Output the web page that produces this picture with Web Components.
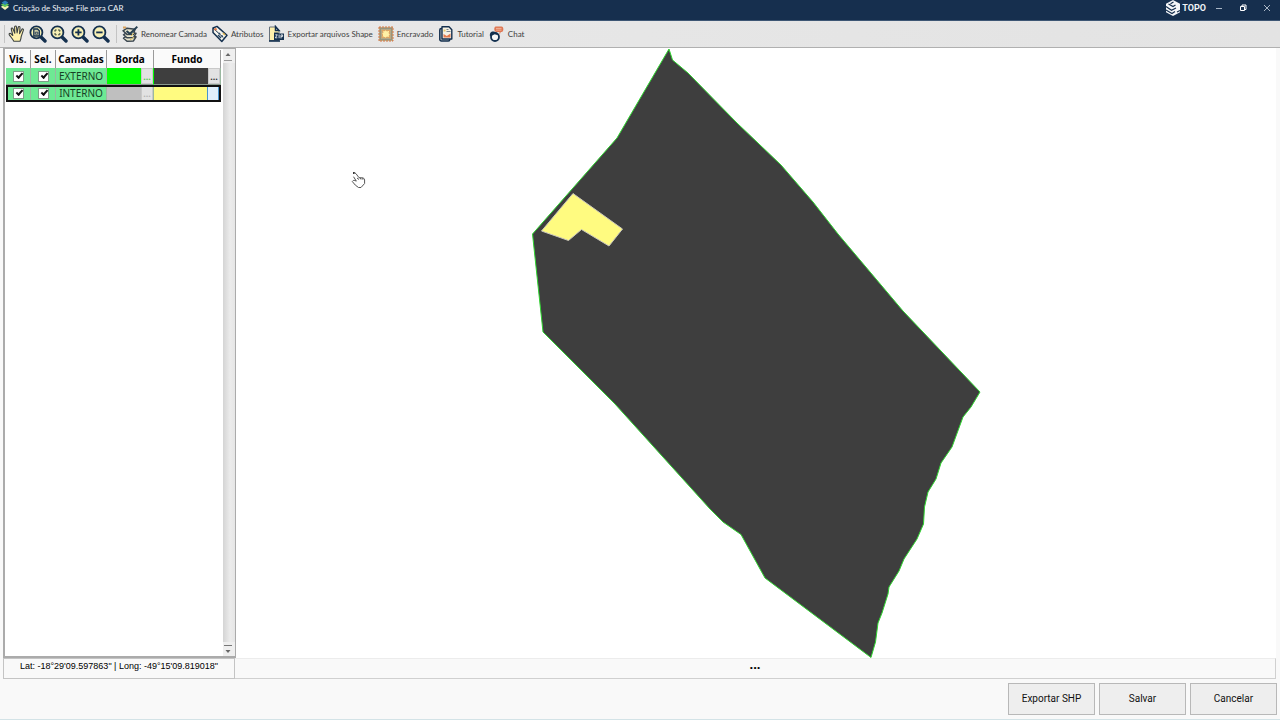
<!DOCTYPE html>
<html lang="pt-BR">
<head>
<meta charset="utf-8">
<title>Criação de Shape File para CAR</title>
<style>
html, body { height: 100%; margin: 0; }
body { font-family: "Noto Sans", "Open Sans", sans-serif; background: #f9f9f9; overflow: hidden; }
</style>
</head>
<body>
<app-window></app-window>
<script>
const define = (name, html, setup) => {
  const template = document.createElement('template');
  template.innerHTML = html;
  customElements.define(name, class extends HTMLElement {
    constructor() {
      super();
      this.attachShadow({ mode: 'open' }).append(template.content.cloneNode(true));
    }
    connectedCallback() { if (setup) setup(this, this.shadowRoot); }
  });
};

const lens = inner => `<svg viewBox="0 0 18 18"><path d="M11.5 11.5 16 16" stroke="#14304f" stroke-width="3.4" stroke-linecap="round"/><circle cx="7.4" cy="7.4" r="6" fill="#f7f0b5" stroke="#14304f" stroke-width="1.8"/>${inner}</svg>`;
const icons = {
  hand: `<svg viewBox="0 0 18 18"><path d="M5.8 16.2C4.4 13.6 2.3 11.4 1.2 9.6c-.5-1 .8-1.7 1.6-.9l2 1.8L3.3 4.2c-.3-1.2 1.2-1.6 1.7-.5l1.8 4.6L6.6 2c0-1.300 1.700-1.300 1.900 0l.6 5.900 1.100-5.600c.3-1.200 1.900-.9 1.800.3l-.4 6 2.200-4.200c.6-1 2-.4 1.600.7l-2.200 6.500c-.2 2.200-.3 3-1.200 4.600z" fill="#fff2ab" stroke="#3b4141" stroke-width="1.100" stroke-linejoin="round"/></svg>`,
  page: lens('<path d="M4.800 4h3.700L10.300 5.800V11H4.800z" fill="#d3d0a8" stroke="#14304f" stroke-width="1.300"/><path d="M6.300 7.200h2.500v2H6.300z" fill="none" stroke="#14304f" stroke-width=".8"/>'),
  fit: lens('<path d="M4.500 6.400 6.400 4.500M8.400 4.500l1.900 1.900M10.300 8.400l-1.900 1.900M6.400 10.300 4.500 8.400" fill="none" stroke="#5c6652" stroke-width="1.500"/>'),
  plus: lens('<path d="M7.400 4.200v6.400M4.200 7.400h6.400" stroke="#14304f" stroke-width="1.800"/>'),
  minus: lens('<path d="M4.200 7.400h6.400" stroke="#14304f" stroke-width="1.800"/>'),
  layers: `<svg viewBox="0 0 18 18"><g fill="#e9e5cd" stroke="#3a4650" stroke-width="1.500" stroke-linejoin="round"><path d="M2.500 13.200 5 11.500l10 .3-2.500 4.100-6.500.4z"/><path d="M2.500 9.800 5 8l10 .3-2.500 4.200-6.500.3z"/><path d="M2 5.800 6 3.200l8 1-1.500 5-6.300.4z"/></g><path d="M5.500 6 9 8.800 16.300 1.600" fill="none" stroke="#263f51" stroke-width="2"/><path d="M2 1.500h3v2H2z" fill="#d8a35e"/><path d="M10 11l3-3M9 15l4-3" stroke="#e1c25f"/></svg>`,
  tag: `<svg viewBox="0 0 18 18"><path d="M2 7.500V3l4-1.600 10 8.800-5.200 6.300z" fill="#f7f6ee" stroke="#14304f" stroke-width="1.500" stroke-linejoin="round"/><path d="M2 3 12.300 12.500" stroke="#14304f" stroke-width="1"/><circle cx="4.500" cy="4.200" r="1.300" fill="#e47b49"/><path d="m8 8 1 1m1.500 1.500 1.300 1.300M7 10l3 3" stroke="#294765" stroke-width="1.500"/><path d="m12 8 2 2" stroke="#ddb24a" stroke-width="1.600"/></svg>`,
  zip: `<svg viewBox="0 0 18 18"><path d="M1.500 2h6L11 5.500v10H1.500z" fill="#fff1ac" stroke="#66707b"/><path d="M1 16h11" stroke="#14304f" stroke-width="1.600"/><path d="M7.500 1.500v4h3.500z" fill="#fff" stroke="#14304f" stroke-width="1.500"/><path d="M6 7.500h4l1 1h5V15H6z" fill="#14304f"/><path d="M7.300 9.800h2l-2 3h2M11.100 9.500v3.700M13 13.400V9.900h1.600v1.700H13" fill="none" stroke="#eff2f4" stroke-width=".9"/></svg>`,
  inset: `<svg viewBox="0 0 18 18"><rect x="2" y="2" width="14" height="14" fill="#b3ab8a" stroke="#d87742" stroke-dasharray="2 1"/><rect x="3.500" y="3.500" width="11" height="11" fill="none" stroke="#7c7c72" stroke-dasharray="1 1"/><path d="m5 5 2 1 1.500-1 1.500 1 3-1-1 3 1 1.500-1 1.500 1 2-3-1-1.500 1-2-1-1.500 1 .6-3-.6-1.500 1-1z" fill="#fff0a5" stroke="#e49b50" stroke-width=".8"/></svg>`,
  manual: `<svg viewBox="0 0 18 18"><rect x="2.800" y="3.500" width="10" height="12.500" rx="1.500" fill="#c8ccce" stroke="#14304f" stroke-width="1.500"/><path d="M5 1.800h7l2.800 3V14H5z" fill="#f5f1e5" stroke="#14304f" stroke-width="1.400" stroke-linejoin="round"/><path d="M6.500 4.500h2v2h-2z" fill="#e9c86a"/><path d="M9.500 4.500h2M9.500 6.500h4" stroke="#7c8791"/><path d="M6.500 12.500V9l3.300 2L13.500 8.500v4z" fill="#e5794c"/></svg>`,
  chat: `<svg viewBox="0 0 18 18"><circle cx="7" cy="12" r="4" fill="#f8f8f8" stroke="#14304f" stroke-width="1.800"/><path d="M2 11.500C1 7 5 5 8.500 8L10 10 6.500 9.300z" fill="#14304f"/><path d="M7.500 1.500h6c2.500 0 2.500 5.500 0 5.500h-.7L11.500 10V7H8.500C6 7 5.500 2.500 7.500 1.500z" fill="#df7854"/><path d="M8 3.400h5.500M8 5.100h5.500" stroke="#f6c1ab" stroke-width=".8"/></svg>`
};

define('title-bar', `
<style>
:host { display: flex; align-items: flex-start; height: 20px; padding-right: 1px; background: #162f4e; border-bottom: 1px solid #3d5674; color: #eef2f6; }
.mark { width: 10px; height: 11px; flex: none; margin-right: 3px; }
h1 { margin: 0; flex: 1; font: 400 8px/16px "Lato", sans-serif; }
.brand { display: flex; align-items: center; gap: 1px; font: 700 9px/16px "Roboto", sans-serif; margin-right: 1px; }
.brand svg { width: 16px; height: 16px; }
button { width: 24px; height: 16px; padding: 0; border: 0; background: none; color: #aab7c6; display: grid; place-items: center; }
button svg { width: 8px; height: 8px; fill: none; stroke: currentColor; }
</style>
<svg class="mark" viewBox="0 0 12 12"><path d="M1 7.500 6 5l5 2.500-5 4z" fill="#f7f3b0"/><path d="M1 5 6 2l5 3-5 3.200z" fill="#61c556"/><path d="M2 2.500 6 0l4 2.500-4 3z" fill="#2b7eb6"/></svg>
<h1>Criação de Shape File para CAR</h1>
<div class="brand"><svg viewBox="0 0 16 16"><path d="M8 0 15 3.700v8.600L8 16 1 12.300V3.700z" fill="#f4f6f8"/><path d="M3.500 4 8 6.500l2.500-1.500M1 6.500l5.500 3.800L11 8M1 10l6 3.500 3-2M8.500 2 5.500 3.800M15 10.500l-3 1.500" fill="none" stroke="#162f4e" stroke-width="1.200"/></svg><span>TOPO</span></div>
<button aria-label="Minimizar"><svg viewBox="0 0 8 8"><path d="M1 4.500h6"/></svg></button>
<button aria-label="Restaurar"><svg viewBox="0 0 8 8"><path d="M1.500 2.500h4v4h-4zM3 2V1h4v4.500H6" stroke="#fff"/></svg></button>
<button aria-label="Fechar"><svg viewBox="0 0 8 8"><path d="m1 1 6 6m0-6L1 7"/></svg></button>`);

define('tool-button', `
<style>
:host { display: block; flex: none; }
button { display: flex; align-items: center; gap: 2px; height: 24px; padding: 0 2px; border: 0; background: none; color: #404040; font: 400 8px/16px "Lato", sans-serif; white-space: nowrap; }
:host([compact]) button { padding: 0 2px 0 1px; }
i { display: block; width: 18px; height: 18px; }
i svg { display: block; width: 18px; height: 18px; fill: none; }
:host([compact]) span { display: none; }
</style>
<button><i></i><span><slot></slot></span></button>`, (host, root) => {
  root.querySelector('i').innerHTML = icons[host.getAttribute('icon')];
  const label = host.getAttribute('label');
  if (label) root.querySelector('button').setAttribute('aria-label', label);
});

define('tool-bar', `
<style>
:host { display: flex; align-items: center; height: 26px; padding-left: 4px; background: linear-gradient(90deg, #e9e9e9, #e3e3e3); border-bottom: 1px solid #b0b0b0; }
hr { width: 1px; height: 18px; margin: 0 2px 0 0; border: 0; background: #c4c4c4; flex: none; }
.group { display: flex; }
.mid { margin: 0 2px 0 4px; }
</style>
<hr>
<div class="group">
<tool-button compact icon="hand" label="Mover"></tool-button>
<tool-button compact icon="page" label="Zoom página"></tool-button>
<tool-button compact icon="fit" label="Zoom extensão"></tool-button>
<tool-button compact icon="plus" label="Aumentar zoom"></tool-button>
<tool-button compact icon="minus" label="Diminuir zoom"></tool-button>
</div>
<hr class="mid">
<tool-button icon="layers">Renomear Camada</tool-button>
<tool-button icon="tag">Atributos</tool-button>
<tool-button icon="zip">Exportar arquivos Shape</tool-button>
<tool-button icon="inset">Encravado</tool-button>
<tool-button icon="manual">Tutorial</tool-button>
<tool-button icon="chat">Chat</tool-button>`);

define('scroll-rail', `
<style>
:host { display: flex; flex-direction: column; justify-content: space-between; background: linear-gradient(90deg, #d4d4d4, #ececec 60%, #e6e6e6); }
button { height: 14px; padding: 0 2px 0 0; border: 0; background: #efefef; display: grid; place-items: center; }
svg { width: 8px; height: 10px; }
</style>
<button aria-label="Rolar para cima"><svg viewBox="0 0 8 10"><path d="m1.500 5 2.500-3 2.500 3z" fill="#666"/><path d="M0 9.500h8" stroke="#999"/></svg></button>
<button aria-label="Rolar para baixo"><svg viewBox="0 0 8 10"><path d="M0 1.500h8" stroke="#777"/><path d="m1.500 6 2.500 3 2.500-3z" fill="#666"/></svg></button>`);

define('layer-table', `
<style>
:host { display: block; }
table { width: 100%; table-layout: fixed; border-collapse: separate; border-spacing: 0; font-size: 10px; line-height: 16px; }
th, td { box-sizing: border-box; height: 17px; padding: 0; text-align: center; white-space: nowrap; overflow: hidden; border-right: 1px solid #9a9a9a; }
th { height: 18px; background: #fafafa; color: #000; }
td { background: #6ee994; color: #173f25; border-right-color: #9ab8a0; border-bottom: 1px solid #8a9a8e; }
.current { outline: 2px solid #111; outline-offset: -2px; }
.current td { border-bottom-color: #111; }
input { appearance: none; display: block; width: 9px; height: 9px; margin: 0 auto; background: #fff; box-shadow: 0 0 0 1px #7e9d87; position: relative; }
input:checked::after { content: ""; position: absolute; left: 2px; top: 1px; width: 5px; height: 2px; border: solid #111; border-width: 0 0 2px 2px; transform: rotate(-48deg); }
.swatch { display: flex; justify-content: flex-end; }
.swatch button { width: 12px; height: 16px; padding: 0; border: 1px solid #c9c9c9; background: #e2e2e2; font: 700 9px/9px "Noto Sans", sans-serif; color: #333; }
td.green { background: #0f0; border-right-color: #0f0; } .green button { color: #52c952; }
td.dark { background: #3e3e3e; }
td.grey { background: #bfbfbf; } .grey button { color: #b5b5b5; }
td.yellow { background: #fffb80; } .yellow .swatch { padding-right: 1px; } .yellow .swatch button { background: #e1f0fb; border-color: #4795cf; }
</style>
<table>
<colgroup><col style="width:25px"><col style="width:25px"><col style="width:51px"><col style="width:47px"><col></colgroup>
<thead><tr><th>Vis.</th><th>Sel.</th><th>Camadas</th><th>Borda</th><th>Fundo</th></tr></thead>
<tbody>
<tr><td><input type="checkbox" checked aria-label="EXTERNO visível"></td><td><input type="checkbox" checked aria-label="EXTERNO selecionável"></td><td>EXTERNO</td><td class="green"><div class="swatch"><button aria-label="Cor da borda">...</button></div></td><td class="dark"><div class="swatch"><button aria-label="Cor do fundo">...</button></div></td></tr>
<tr class="current"><td><input type="checkbox" checked aria-label="INTERNO visível"></td><td><input type="checkbox" checked aria-label="INTERNO selecionável"></td><td>INTERNO</td><td class="grey"><div class="swatch"><button aria-label="Cor da borda">...</button></div></td><td class="yellow"><div class="swatch"><button aria-label="Cor do fundo"></button></div></td></tr>
</tbody>
</table>`);

define('layer-panel', `
<style>
:host { display: flex; box-sizing: border-box; background: #fff; border: 2px solid #ababab; border-width: 1px 1px 2px 2px; }
layer-table { flex: 1; padding: 1px 2px 0 1px; }
scroll-rail { width: 12px; }
</style>
<layer-table></layer-table><scroll-rail></scroll-rail>`);

define('map-view', `
<style>
:host { display: block; background: #fff; min-width: 0; min-height: 0; overflow: hidden; }
svg { display: block; width: 100%; height: 100%; }
</style>
<svg viewBox="236 48 1040 610" role="img" aria-label="Mapa">
<path d="M669 49 672.500 60 688 73 737 123 781 165 813 202 838 234 903 311 980 392 971 407 963 417 952 447 941 463 936 479 928 492 924.500 507 923.500 524 917 539 904 559 899 571 889 587 888 594 882 613 878 623 875.500 642 871 657.500 765 578 741 534.500 723 522 710 509 615 404 543 332 532.500 234 617 138z" fill="#3e3e3e" stroke="#2fd52f" stroke-width="1"/>
<path d="M573 193.500 622.500 229 609 246 581.500 229.500 568.500 240.500 541.500 231z" fill="#fffb80" stroke="#c9c6bd" stroke-width="1"/>
<path d="M353.500 173q1.500-.8 2.500.7l3 4 4 .2q1.600.6 1.600 2v3.600L361 187.500h-2.500l-3.200-2.400-3-3.600q.8-1.600 2.500-1l1.500.6-2.800-4.400M357 178l2 1.500m1-1.600 1 1.600m1-1.400 1 1.600" fill="#fff" stroke="#555" stroke-width="1"/>
<path d="M353 173h1.500" stroke="#000" stroke-width="1.500"/>
</svg>`);

define('status-strip', `
<style>
:host { display: flex; height: 21px; color: #000; }
div { box-sizing: border-box; text-align: center; border: 1px solid #c4c4c4; }
.coords { width: 232px; font: 400 9px/14px "Liberation Sans", sans-serif; }
.hint { flex: 1; border-color: #ececec #d0d0d0 #d0d0d0 transparent; border-left: 0; font-weight: 700; font-size: 13px; line-height: 10px; }
</style>
<div class="coords"><slot name="coords"></slot></div><div class="hint"><slot name="hint"></slot></div>`);

define('action-button', `
<style>
:host { display: block; }
button { box-sizing: border-box; width: 87px; height: 32px; border: 1px solid #b8b8b8; background: #eee; color: #111; padding: 0; font: 400 10px/16px "Roboto", sans-serif; }
</style>
<button><slot></slot></button>`);

define('app-window', `
<style>
:host { display: flex; flex-direction: column; height: 100vh; background: #f9f9f9; }
main { flex: 1; min-height: 0; display: flex; padding: 0 4px 0 3px; }
layer-panel { width: 233px; flex: none; }
map-view { flex: 1; }
status-strip { margin: 0 4px 0 3px; }
footer { display: flex; justify-content: flex-end; gap: 4px; padding: 4px 3px 4px; border-bottom: 1px solid #d3e3e7; }
</style>
<title-bar></title-bar>
<tool-bar></tool-bar>
<main><layer-panel></layer-panel><map-view></map-view></main>
<status-strip><span slot="coords">Lat: -18°29'09.597863" | Long: -49°15'09.819018"</span><span slot="hint">...</span></status-strip>
<footer><action-button>Exportar SHP</action-button><action-button>Salvar</action-button><action-button>Cancelar</action-button></footer>`);
</script>
</body>
</html>
